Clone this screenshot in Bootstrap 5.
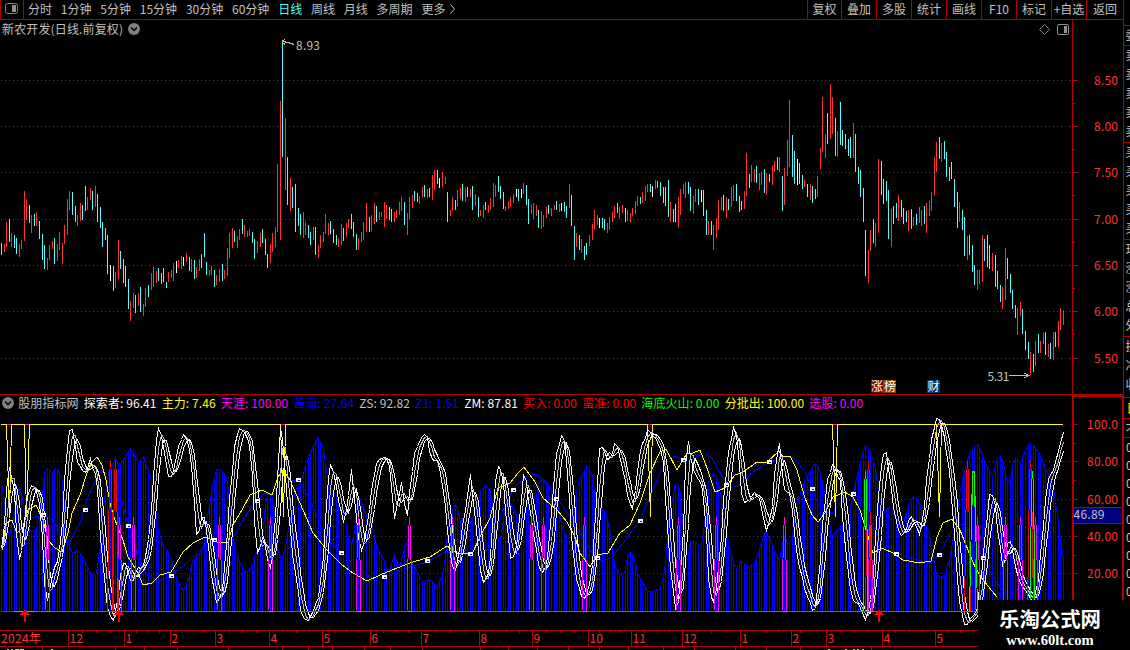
<!DOCTYPE html>
<html lang="zh-CN">
<head>
    <meta charset="UTF-8">
    <meta name="viewport" content="width=device-width, initial-scale=1.0">
    <title>新农开发 日线</title>
    <link href="https://cdn.jsdelivr.net/npm/bootstrap@5.3.0/dist/css/bootstrap.min.css" rel="stylesheet">
    <style>
        body {
            width: 1130px;
            height: 650px;
            background: #000;
            color: #c0c0c0;
            font-family: "Noto Sans CJK SC", sans-serif;
            font-size: 12px;
            line-height: 18px;
        }
        svg { display: block; overflow: visible; flex: none; }
        .topbar { height: 20px; border-bottom: 1px solid #b00000; width: 1123px; }
        .layout-btn { width: 24px; border-left: 1px solid #b00000; border-right: 1px solid #b00000; padding: 2px 0 0 4px; }
        .periods { gap: 8.8px; padding-left: 4px; }
        .periods .current { color: #54fcfc; }
        .tool-btn { width: 35px; border-left: 1px solid #b00000; text-align: center; white-space: nowrap; }
        .tool-first { width: 34px; }
        .tool-last { width: 37px; }
        .title-row { width: 1073px; height: 19px; border-right: 1px solid #b00000; padding-left: 2px; }
        .title-name { letter-spacing: 0.14px; }
        .legend-row { height: 16px; gap: 5.2px; padding-left: 2px; line-height: 16px; margin-top: 1px; }
        .legend-row span { letter-spacing: 0.075px; }
        .side { width: 7px; height: 650px; border-left: 1px solid #b00000; overflow: hidden; }
        .crisp { shape-rendering: crispEdges; }
        .axis-text { fill: #ff3232; font-size: 12px; }
        .note-text { fill: #c0c0c0; font-size: 12px; }
        .watermark { width: 152px; height: 50px; background: #000; color: #fff; padding-right: 8px; }
        .wm-name { font-size: 20.4px; font-weight: 700; line-height: 30px; padding-top: 3px; }
        .wm-site { font-family: "Liberation Serif", serif; font-size: 14.6px; font-weight: 700; line-height: 14px; }
    </style>
</head>
<body class="m-0 overflow-hidden position-relative">
    <div class="d-flex">
        <div class="d-flex flex-column">
            <!-- Toolbar -->
            <nav class="topbar d-flex justify-content-between">
                <div class="d-flex">
                    <div class="layout-btn">
                        <svg width="14" height="13"><rect x="0.5" y="1.5" width="12" height="10" rx="2" fill="none" stroke="#808080"/><rect x="7" y="3" width="4" height="7" fill="#909090"/></svg>
                    </div>
                    <div class="periods d-flex text-nowrap">
                        <span>分时</span><span>1分钟</span><span>5分钟</span><span>15分钟</span><span>30分钟</span><span>60分钟</span><span class="current">日线</span><span>周线</span><span>月线</span><span>多周期</span>
                        <span class="d-flex">更多<svg width="10" height="18"><path d="M5.5 4.500l4 4.500l-4 4.500" fill="none" stroke="#c0c0c0"/></svg></span>
                    </div>
                </div>
                <div class="d-flex">
                    <span class="tool-btn tool-first">复权</span><span class="tool-btn">叠加</span><span class="tool-btn">多股</span><span class="tool-btn">统计</span><span class="tool-btn">画线</span><span class="tool-btn">F10</span><span class="tool-btn">标记</span><span class="tool-btn">+自选</span><span class="tool-btn tool-last">返回</span>
                </div>
            </nav>

            <!-- Price chart -->
            <div class="title-row d-flex justify-content-between">
                <div class="d-flex">
                    <span class="title-name">新农开发(日线.前复权)</span>
                    <svg class="ms-1" width="14" height="18"><circle cx="7" cy="9" r="6" fill="#808080"/><path d="M4 7.500l3 3l3-3" fill="none" stroke="#000" stroke-width="1.5"/></svg>
                </div>
                <svg width="32" height="18"><path d="M4.500 4.500l5 5l-5 5l-5-5z" fill="none" stroke="#808080"/><rect x="17.500" y="4.500" width="11" height="10" rx="1.500" fill="none" stroke="#909090"/><rect x="24" y="6" width="3" height="7" fill="#909090"/></svg>
            </div>
            <svg id="price" width="1123" height="355" viewBox="0 39 1123 355"></svg>

            <!-- Indicator chart -->
            <div id="legend" class="legend-row d-flex text-nowrap">
                <svg width="11" height="16"><circle cx="6" cy="8" r="6" fill="#808080"/><path d="M3 6.500l3 3l3-3" fill="none" stroke="#000" stroke-width="1.5"/></svg>
            </div>
            <svg id="indicator" width="1123" height="239" viewBox="0 411 1123 239"></svg>
        </div>
        <div class="side"><svg id="side" width="6" height="650" viewBox="1124 0 6 650"></svg></div>
    </div>

    <div class="watermark position-absolute bottom-0 end-0 text-center">
        <div class="wm-name">乐淘公式网</div>
        <div class="wm-site">www.60lt.com</div>
    </div>

    <script>
        const RED = '#ff3232', CYAN = '#54fcfc', LINE = '#b00000';
        const STEP = 2.5346;
        const barX = i => Math.round(1 + STEP * i);

        // one entry per day: colour (r up, c down, w flat), high, low
        const candles = `c243-255 r244-252 r222-247 c219-242 r233-247 c235-248 c238-254 r244-257 r240-249 r191-241
r199-220 c205-223 r215-233 c214-226 r212-226 c221-239 c234-260 c245-269 r258-270 r245-260
r241-249 c238-264 r244-261 r232-250 r243-264 r225-244 r199-235 r191-210 c192-215 c206-222
r215-226 r203-221 c205-220 c186-211 r197-210 r188-200 c191-210 r186-207 c194-222 c207-228
c222-247 c228-240 c235-274 w265-281 c266-291 r272-288 r240-279 c251-269 c259-283 c266-287
c279-309 r301-321 r293-308 c295-313 r293-306 c287-312 r304-316 r288-307 c285-297 r273-290
r267-287 r271-283 c268-281 c273-284 c268-282 c282-288 r272-282 r270-278 r263-281 w261-273
r260-268 r256-269 w257-266 r253-262 c257-271 r259-272 c260-279 r267-278 r259-271 c254-268
c233-257 c262-275 r270-276 r266-275 c270-287 r275-285 r269-282 c264-281 r270-279 r248-276
r233-258 r228-248 c231-242 r236-248 r229-240 c219-234 r225-237 r231-237 r229-236 c232-243
c239-259 r241-253 r233-247 c229-243 c239-255 c254-268 r244-263 r233-252 r227-247 r164-232
r101-240 c42-157 r118-190 c157-205 r178-211 c187-208 c184-232 c208-226 c214-235 r212-238
r222-235 c225-238 c232-245 r227-240 c227-255 r245-258 r235-248 r232-242 r214-234 r223-235
c221-234 c229-243 c235-245 r238-247 r224-245 c228-241 r223-237 r219-228 c214-229 c222-237
c234-250 r238-250 r232-242 r222-240 r203-232 c217-232 r215-231 r203-224 c206-222 r212-220
r212-217 r202-227 r205-219 c207-220 c209-222 r212-222 r210-218 r202-215 r197-211 c202-225
r213-235 r197-219 r195-208 c191-201 c193-202 r196-204 r187-197 c185-197 r189-198 c188-197
r175-200 r170-190 c170-184 w178-188 r172-187 r177-184 c192-222 r210-216 r197-211 c200-210
r190-207 r188-199 c184-201 r188-202 c187-197 r189-197 c186-210 r194-206 c197-217 r210-216
r205-218 c202-210 r205-213 r198-210 r183-207 r185-197 c176-192 c186-199 c192-209 r206-211
r201-209 r197-207 r194-203 w189-197 c189-201 w189-198 r183-194 c185-205 c199-224 r205-214
r203-219 r205-216 c210-228 r211-229 r215-227 r207-218 c205-214 r208-216 r205-210 c201-210
r204-212 w203-211 c202-212 c206-218 r184-208 c195-226 c226-260 r233-247 c235-250 r239-253
c246-260 c243-255 r235-246 r224-240 r210-230 r215-225 w218-228 c218-228 c219-230 r223-233
r217-230 r212-222 r206-218 c203-213 r207-219 r205-213 c208-222 r210-221 r213-222 r208-216
r201-214 r196-206 c197-204 r192-203 r186-201 r184-192 c184-192 w186-197 r180-189 c181-188
c182-196 c187-203 c187-206 c180-217 r202-222 c209-222 c204-222 r197-228 r189-215 r184-194
r182-198 c182-194 c187-211 r196-214 r189-202 c189-205 w190-202 c190-216 c210-235 r221-235
c221-235 r225-250 r218-238 r200-230 r197-210 c195-211 r197-218 c199-210 r187-207 r185-201
c184-201 c196-212 c201-210 r191-209 r153-196 c174-188 r165-182 r169-182 c166-183 r173-190
r172-185 c169-193 r173-195 c174-182 r166-185 r161-172 c157-170 r157-172 c176-211 r168-205
r140-176 r100-167 c135-177 c151-184 w159-185 c163-184 c175-189 r180-187 c184-197 r184-200
c186-203 c189-199 r176-197 r148-169 r97-152 r134-158 c113-144 r84-139 r97-134 c118-156
r131-157 c102-145 c130-146 c134-149 c139-156 c137-158 r123-158 c134-172 c167-184 c170-197
c188-222 c230-276 r250-283 r230-251 c219-243 r223-247 r159-233 c161-195 c179-204 c181-201
c190-239 r209-247 c206-224 c203-218 r195-221 c200-217 c208-224 c211-222 r210-231 c209-229
r217-226 c214-225 r207-223 r210-226 c206-224 r203-233 r201-216 r192-211 r157-196 r142-172
c137-159 r143-162 c141-159 c152-177 c167-181 c162-179 c179-207 c192-228 r202-222 c210-230
c217-256 r236-260 c235-255 c245-272 c265-285 r270-290 r270-284 r235-282 c239-261 c235-267
c245-269 r253-271 c255-287 c271-289 c285-302 r287-309 r248-300 c258-279 c274-293 c290-309
c305-318 r308-335 r302-316 c309-334 c331-350 c342-359 r352-375 c354-372 r341-366 c334-353
r341-353 r333-344 c332-355 r344-357 c343-359 r332-360 c332-347 r321-347 r308-330 r310-325`.split(/\s+/);

        const volume = '1,482 7,537 13,522 16,492 19,486 22,497 26,525 32,532 37,527 41,500 44,473 47,467 52,473 55,466 59,472 63,483 65,520 68,543 72,553 77,550 83,557 90,573 96,577 100,543 103,505 107,478 111,465 115,458 118,465 123,460 127,452 130,448 133,453 138,462 143,456 147,468 150,478 153,493 157,523 160,538 163,547 167,550 172,563 177,580 183,591 188,577 193,557 200,552 203,547 207,517 212,487 217,467 223,472 228,485 230,520 233,540 238,560 245,572 250,569 257,550 262,540 265,498 268,493 273,497 276,543 281,562 285,547 290,520 295,490 300,482 305,465 312,447 318,437 323,448 326,468 330,493 337,496 342,502 347,533 352,548 355,520 358,496 363,507 367,517 370,517 375,543 382,557 388,572 394,555 400,568 406,537 409,560 415,568 422,582 430,579 437,587 443,573 447,533 451,510 456,502 460,523 463,516 468,523 477,510 479,490 486,484 491,492 495,533 500,540 505,503 510,502 517,518 523,518 528,497 537,495 539,478 545,480 552,490 557,503 562,530 568,538 573,510 578,482 587,464 592,477 595,495 600,509 605,510 610,533 615,568 623,577 627,557 631,548 637,573 648,592 660,588 665,565 668,517 676,479 681,497 684,553 688,553 691,538 700,547 703,533 708,482 713,473 718,480 723,513 728,543 735,569 741,560 747,567 755,562 761,543 765,529 772,545 779,561 783,533 788,547 793,530 797,503 805,478 816,461 822,480 827,513 832,537 838,528 847,520 855,483 862,453 866,443 870,452 875,465 879,500 883,513 889,506 895,517 902,527 907,508 913,496 918,500 923,520 929,533 933,560 937,577 944,575 950,557 955,523 960,487 966,462 972,448 978,443 983,458 992,476 996,460 1001,454 1008,487 1014,457 1020,463 1028,443 1033,445 1040,455 1047,472 1053,487 1058,520 1063,558';
        const fast = '1,548 3,533 5,503 8,465 11,477 13,482 15,507 17,550 20,565 23,530 27,493 32,484 36,490 39,503 42,543 44,583 47,603 52,573 57,560 61,540 63,497 67,447 70,426 72,429 75,450 77,462 82,470 86,473 90,457 93,470 97,480 99,530 103,563 106,600 109,615 113,621 117,600 119,583 122,563 126,563 129,580 133,580 137,567 142,568 147,550 150,517 153,477 155,443 158,428 162,438 165,460 169,480 173,472 177,450 183,433 187,440 192,470 194,510 197,543 200,520 203,513 207,533 209,557 213,587 217,605 222,587 225,557 228,510 232,467 235,438 239,428 245,432 250,447 253,490 255,533 257,553 262,538 266,550 269,573 273,543 277,483 280,424 283,443 285,477 288,510 292,550 297,587 299,607 303,618 308,620 313,610 318,597 322,570 325,527 328,477 331,461 334,477 338,500 343,523 348,497 351,467 354,497 357,530 361,550 364,543 367,520 371,490 375,465 379,458 386,457 390,470 394,520 398,500 401,478 406,520 410,483 414,453 418,443 423,433 427,437 430,455 433,462 436,457 440,470 444,500 447,530 450,557 454,573 458,557 463,520 467,498 470,473 474,507 478,557 482,583 487,577 491,550 493,503 496,473 499,462 503,483 507,530 511,562 515,550 519,520 522,483 524,467 527,493 531,520 535,545 540,573 545,570 549,543 552,497 555,457 562,432 565,447 567,470 570,520 573,557 577,583 583,600 588,592 593,553 596,493 599,448 603,447 607,460 611,457 615,440 619,453 623,473 628,500 632,509 636,480 640,448 645,438 648,427 651,435 656,438 662,455 665,497 668,547 672,587 676,613 679,593 683,527 685,467 688,440 692,467 697,477 702,487 705,520 708,577 712,607 716,587 720,550 723,503 727,460 733,426 737,438 740,487 743,502 748,500 754,492 760,500 764,522 767,532 772,503 775,460 779,442 782,477 785,493 789,490 793,520 797,557 805,590 812,610 815,608 819,570 823,513 827,480 833,462 837,475 840,480 843,523 847,570 852,600 858,603 865,620 870,603 874,563 877,507 881,460 885,449 888,467 892,500 896,523 900,535 905,532 910,515 915,523 919,535 923,513 927,470 932,433 937,415 941,423 945,443 950,477 954,533 957,587 961,613 965,627 970,617 976,613 979,590 983,557 986,523 990,490 994,500 998,537 1003,570 1007,543 1011,540 1014,563 1020,583 1027,593 1033,603 1038,577 1043,523 1047,480 1053,470 1063,432';
        const yellow = '2,550 6,523 12,520 17,533 23,527 28,510 36,505 43,520 48,540 55,548 62,552 68,533 72,513 80,495 87,473 91,463 97,457 102,465 106,480 110,503 115,520 123,540 128,557 138,573 143,585 152,583 160,575 171,572 183,552 193,543 205,537 217,542 228,542 233,525 242,510 250,495 262,490 272,495 278,477 283,470 290,480 300,503 313,533 327,550 342,565 353,573 367,581 380,575 397,568 413,562 430,557 447,546 457,553 472,554 480,537 490,518 498,488 510,483 518,473 524,467 535,482 543,498 557,510 567,522 575,537 580,553 590,567 597,555 608,553 620,533 630,525 640,503 650,473 660,452 666,449 677,470 687,453 693,453 700,450 707,468 715,492 725,488 735,475 743,472 757,462 767,462 779,451 783,457 790,456 797,470 805,498 812,515 818,522 825,513 833,497 845,492 853,497 860,510 867,533 873,553 882,548 893,553 903,560 920,563 931,561 937,537 943,523 952,519 960,530 968,550 975,567 983,580 997,597';
        const blue = '7,535 17,528 30,518 43,515 53,520 63,538 70,542 80,523 88,497 97,477 105,468 113,477 120,493 128,525 137,553 147,575 160,581 170,576 187,563 202,548 213,540 232,540 243,520 255,502 263,494 278,493 283,487 292,480 300,482 310,500 322,527 330,542 342,553 357,568 370,577 385,577 400,570 427,562 443,553 460,551 477,554 488,543 497,527 505,505 515,487 527,476 535,474 543,480 557,498 573,520 583,538 593,555 602,561 612,557 627,538 640,520 650,497 660,473 667,460 675,456 688,462 703,453 712,458 723,478 732,488 743,483 753,472 768,462 790,456 798,462 807,475 815,497 823,513 833,512 843,500 853,494 860,498 870,518 878,537 887,550 897,553 910,558 930,563 940,553 948,537 955,527 963,524 972,533 987,567 1000,587 1008,597';

        const parse = s => s.split(' ').map(p => p.split(',').map(Number));

        // value of a polyline at every bar
        function sample(s) {
            const pts = parse(s);
            return candles.map((c, i) => {
                const x = 1 + STEP * i;
                let k = 1;
                while (k < pts.length - 1 && pts[k][0] < x) k++;
                const [x0, y0] = pts[k - 1], [x1, y1] = pts[k];
                return y0 + (y1 - y0) * Math.min(1, Math.max(0, (x - x0) / (x1 - x0)));
            });
        }
        const average = a => a.map((v, i) => (v + a[Math.max(0, i - 1)] + a[Math.max(0, i - 2)]) / 3);
        const toPoints = a => a.map((v, i) => `${barX(i) + 0.5},${Math.round(v) + 0.5}`).join(' ');

        const rect = (x, y, w, h, fill) => `<rect x="${x}" y="${y}" width="${w}" height="${h}" fill="${fill}"/>`;
        const poly = (points, stroke, extra = '') => `<polyline points="${points}" fill="none" stroke="${stroke}" ${extra}/>`;
        const text = (x, y, s, cls = 'axis-text', extra = '') => `<text x="${x}" y="${y}" class="${cls}" ${extra}>${s}</text>`;
        const dots = (y, x2) => `<line x1="1" y1="${y + 0.5}" x2="${x2}" y2="${y + 0.5}" stroke="#b01010" stroke-dasharray="1 3"/>`;

        function drawPrice() {
            let g = '<g class="crisp">';
            [80, 126, 172, 219, 265, 311, 358].forEach((y, i) => {
                g += dots(y, 1072) + rect(1073, y, 5, 1, LINE);
                if (i < 6) g += rect(1073, y + 23, 2, 1, LINE);
            });
            g += rect(1072, 39, 1, 356, LINE) + rect(0, 394, 1123, 1, LINE);
            candles.forEach((c, i) => {
                const [hi, lo] = c.slice(1).split('-').map(Number);
                g += rect(barX(i), hi, 1, lo - hi, { r: RED, c: CYAN, w: '#fff' }[c[0]]);
            });
            g += poly('285,39.500 282.500,40.500 282.500,42.500 285,44.500', '#c0c0c0') + poly('283,41.500 288,42.500 294,44.500', '#c0c0c0');
            g += rect(1009, 375, 20, 1, '#c0c0c0') + poly('1024,373 1029,375.500 1024,378', '#c0c0c0');
            g += rect(871, 380, 12, 13, '#800000') + rect(883, 380, 13, 13, '#804000') + rect(927, 380, 13, 13, '#003870') + '</g>';
            ['8.50', '8.00', '7.50', '7.00', '6.50', '6.00', '5.50'].forEach((s, i) => {
                g += text(1094, [85, 131, 177, 224, 270, 316, 363][i], s, 'axis-text', 'textLength="24"');
            });
            g += text(296, 50, '8.93', 'note-text', 'textLength="24"') + text(987.500, 381, '5.31', 'note-text', 'textLength="22"');
            g += text(871, 391, '涨榜', '', 'fill="#fff" textLength="25"') + text(927.500, 391, '财', '', 'fill="#fff"');
            document.getElementById('price').innerHTML = g;
        }

        function tent(x, top, color, half = 2.5) {
            return poly(`${x - half},611 ${x - 1},${top + 16} ${x},${top} ${x + 1},${top + 16} ${x + half},611`, color);
        }

        function drawIndicator() {
            let g = '<g class="crisp">';
            [461, 499, 536, 573].forEach(y => g += dots(y, 1072));
            const vol = sample(volume);
            vol.forEach((v, i) => g += rect(barX(i), Math.round(v), 1, 611 - Math.round(v), '#00f'));
            g += poly(toPoints(vol), '#00f');
            g += poly(blue, '#00f') + poly(yellow, '#ff0');

            g += rect(1, 424, 1062, 1, '#ff0');
            [[6, 9, 11], [24, 26, 29], [280, 283, 285], [647, 650, 652], [832, 835, 837], [936, 939, 941]].forEach(([a, b, c]) => {
                g += rect(a + 1, 424, c - a - 1, 1, '#f0f') + poly(`${a + .5},424 ${b + .5},517 ${c + .5},424`, '#ff0');
            });

            const mid = average(sample(fast));
            g += poly(toPoints(sample(fast)), '#fff') + poly(toPoints(mid), '#c0c0c0') + poly(toPoints(average(mid)), '#fff');

            g += rect(1, 611, 1062, 1, '#f0f') + rect(1, 611, 13, 1, '#f00') + rect(14, 611, 20, 1, '#0f0');
            [47, 119, 133, 219, 270, 358, 409, 452, 531, 543, 584, 678, 716, 784, 870, 977, 1005, 1020, 1035].forEach(x => {
                g += tent(x + 0.5, 517, '#f0f') + rect(x - 1, 611, 4, 1, '#0f0');
            });
            [110, 115, 868, 967, 1030].forEach(x => g += tent(x + 0.5, 461, '#f00', 3));
            [865, 1032].forEach(x => g += tent(x + 0.5, 471, '#0f0'));
            g += poly('969.500,611 972.500,471.500 974.500,471.500 977.500,611', '#0f0');
            g += poly('971.500,540 972.500,472 974.500,472 975.500,540', '#0f0');

            [[43, 515], [85, 510], [128, 526], [171, 576], [214, 540], [257, 501], [298, 480], [341, 553], [384, 577], [427, 561], [470, 554], [513, 490], [556, 499], [597, 558], [640, 521], [683, 460], [726, 485], [769, 462], [812, 489], [853, 494], [896, 554], [939, 555], [983, 558]].forEach(([x, y]) => {
                g += rect(x - 2, y - 2, 5, 4, '#fff') + rect(x, y, 2, 1, '#00f');
            });
            [25, 119, 879].forEach(x => {
                g += `<path d="M${x} 609l5 6h-4v7h-2v-7h-4z" fill="#f00"/>`;
            });

            // right scale
            g += rect(1072, 395, 2, 206, LINE) + rect(1072, 395, 52, 2, LINE) + rect(1122, 395, 2, 206, LINE);
            [424, 461, 499, 536, 573].forEach((y, i) => {
                g += rect(1074, y, 4, 1, LINE);
                if (i < 4) g += rect(1074, y + 19, 2, 1, LINE);
            });
            g += rect(1074, 507, 48, 17, LINE) + rect(1074, 508, 48, 15, '#000080');

            // date scale
            g += rect(0, 630, 1072, 1, LINE) + rect(0, 646, 1072, 1, LINE);
            const months = [[68, '12'], [124, '1'], [170, '2'], [215, '3'], [269, '4'], [322, '5'], [370, '6'], [421, '7'], [479, '8'], [532, '9'], [588, '10'], [631, '11'], [682, '12'], [740, '1'], [791, '2'], [826, '3'], [882, '4'], [935, '5'], [985, '']];
            months.forEach(([x], i) => {
                g += rect(x, 630, 1, 17, LINE);
                const next = i < months.length - 1 ? months[i + 1][0] : x;
                for (let k = 1; k < 4; k++) g += rect(Math.round(x + (next - x) * k / 4), 631, 1, 2, LINE);
            });
            [42, 115, 144, 177, 228, 282, 308, 332, 364, 390, 422, 480, 508, 537, 568, 599, 628, 663, 694, 735, 766, 800, 871].forEach(x => g += rect(x, 647, 1, 3, LINE));
            [7, 11, 15, 17, 20, 22, 51, 828, 845, 853, 857, 862].forEach(x => g += rect(x, 649, 2, 1, '#c0c0c0'));
            g += '</g>';
            months.forEach(([x, s]) => { if (s) g += text(x + 1.5, 643, s); });
            g += text(1, 643, '2024年', 'axis-text', 'textLength="40"');
            [['100.0', 429], ['80.00', 466], ['60.00', 504], ['40.00', 541], ['20.00', 578]].forEach(([s, y]) => {
                g += text(1087, y, s, 'axis-text', 'textLength="31"');
            });
            g += text(1073.500, 519, '46.89', 'note-text', 'textLength="31"');
            document.getElementById('indicator').innerHTML = g;
        }

        function drawLegend() {
            const items = [
                ['股朋指标网', '#c0c0c0'], ['探索者: 96.41', '#fff'], ['主力: 7.46', '#ff0'], ['天涯: 100.00', '#f0f'],
                ['苦海: 27.64', '#00f'], ['ZS: 92.82', '#c0c0c0'], ['Z1: 1.51', '#00f'], ['ZM: 87.81', '#fff'],
                ['买入: 0.00', '#f00'], ['蛮准: 0.00', '#f00'], ['海底火山: 0.00', '#0f0'], ['分批出: 100.00', '#ff0'], ['选股: 0.00', '#f0f']
            ];
            document.getElementById('legend').innerHTML += items.map(([s, c]) => `<span style="color:${c}">${s}</span>`).join('');
        }

        // quote panel, only its left edge is inside the window
        function drawSide() {
            let g = '<g class="crisp">';
            [25, 45, 142, 239, 336, 397, 418, 437].forEach(y => g += rect(1124, y, 6, 1, LINE));
            g += '</g>';
            g += text(1125.500, 40, '委', 'note-text');
            for (let i = 0; i < 5; i++) {
                g += text(1125.500, 60 + i * 19, '卖', 'note-text');
                g += text(1125.500, 157 + i * 19, '买', 'note-text');
                g += text(1125.500, 254 + i * 19, '现涨涨总外'[i], 'note-text');
            }
            ['换', '净', '收'].forEach((s, i) => g += text(1125.500, 351 + i * 19, s, 'note-text'));
            g += text(1126.500, 413, '日', '', 'fill="#ff0"') + text(1125.500, 434, '不', 'note-text');
            for (let i = 0; i < 9; i++) g += text(1126, 452 + i * 18, '0', 'note-text');
            document.getElementById('side').innerHTML = g;
        }

        drawPrice();
        drawIndicator();
        drawLegend();
        drawSide();
    </script>
    <script src="https://cdn.jsdelivr.net/npm/bootstrap@5.3.0/dist/js/bootstrap.bundle.min.js"></script>
</body>
</html>
